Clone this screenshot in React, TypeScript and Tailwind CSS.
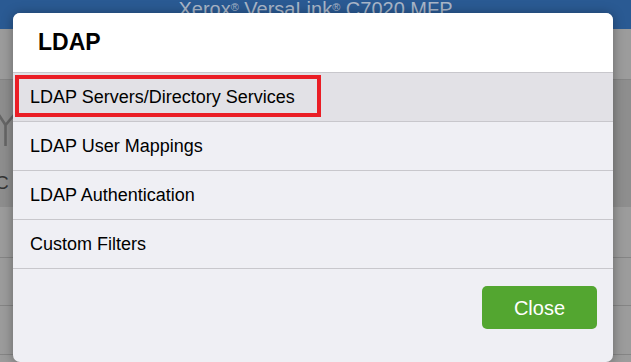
const items = [
  "LDAP Servers/Directory Services",
  "LDAP User Mappings",
  "LDAP Authentication",
  "Custom Filters",
];

function PageBehind() {
  return (
    <div className="flex h-full flex-col">
      <div className="flex h-[29px] justify-center bg-[#2a5a93] text-[20px] leading-[18px] text-[#a9b6c8]">
        <span>
          Xerox<sup className="text-[11px]">®</sup> VersaLink<sup className="text-[11px]">®</sup> C7020 MFP
        </span>
      </div>
      <div className="h-[51px] border-b border-[#858585] bg-[#9c9c9c]" />
      <div className="flex h-[127px] flex-col bg-[#8e8e8e]">
        <svg width="16" height="36" viewBox="0 0 16 36" className="mt-[33px]">
          <path d="M-1 2 L5.5 12 L14 2 M5.5 12 L5.5 33" fill="none" stroke="#666" strokeWidth="2.6" />
        </svg>
        <span className="-ml-[5px] mt-[24px] text-[19px] leading-[20px] text-[#333]">C</span>
      </div>
      <div className="flex flex-1 flex-col bg-[#9c9c9c]">
        <div className="h-[51px] border-b border-[#858585]" />
        <div className="h-[48px] border-b border-[#858585]" />
        <div className="h-[49px] border-b border-[#858585]" />
      </div>
    </div>
  );
}

function LdapModal() {
  return (
    <div className="w-[600px] overflow-hidden rounded-[7px] bg-[#efeff4] shadow-[0_1px_12px_rgba(0,0,0,0.35)]">
      <div className="flex h-[60px] items-center border-b border-[#c8c7cc] bg-white pl-[25px] text-[23px] font-bold text-black">
        LDAP
      </div>
      {items.map((label, i) => (
        <div
          key={label}
          className={
            i === 0
              ? "relative flex h-[49px] items-center border-b border-[#c8c7cc] bg-[#e2e1e6] pl-[17px] text-[18px] text-black"
              : "relative flex h-[49px] items-center border-b border-[#c8c7cc] pl-[17px] text-[18px] text-black"
          }
        >
          {i === 0 && (
            <div className="absolute left-[2px] top-[2px] h-[42px] w-[306px] border-4 border-[#ea1d25]" />
          )}
          <span className="relative">{label}</span>
        </div>
      ))}
      <div className="flex justify-end pb-[17px] pr-[16px] pt-[17px]">
        <button className="h-[43px] w-[115px] rounded-[5px] bg-[#53a630] text-[20px] text-white">
          Close
        </button>
      </div>
    </div>
  );
}

export default function App() {
  return (
    <div className="relative h-[362px] w-[631px] overflow-hidden font-['Liberation_Sans',Arial,sans-serif]">
      <PageBehind />
      <div className="absolute inset-0 flex pl-[13px] pt-[13px]">
        <LdapModal />
      </div>
    </div>
  );
}
